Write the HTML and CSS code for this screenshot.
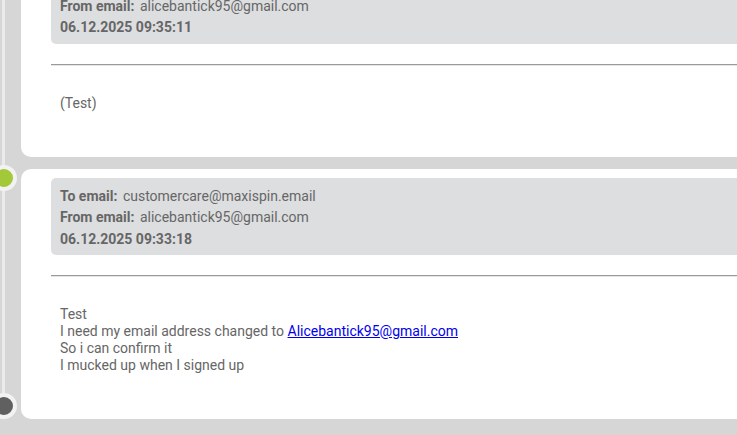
FILE: index.html
```html
<!DOCTYPE html>
<html lang="en">

<head>
    <meta charset="UTF-8">
    <meta name="viewport" content="width=device-width, initial-scale=1.0">
    <title>Ticket history</title>
    <link rel="stylesheet" href="styles.css">
</head>

<body>
    <div class="timeline">
        <div class="entry">
            <span class="dot dot-green"></span>
            <div class="meta">
                <div><b>To email:</b> customercare@maxispin.email</div>
                <div><b>From email:</b> alicebantick95@gmail.com</div>
                <div><b>06.12.2025 09:35:11</b></div>
            </div>
            <hr>
            <div class="message">(Test)</div>
        </div>

        <div class="entry">
            <span class="dot dot-green"></span>
            <div class="meta">
                <div><b>To email:</b> customercare@maxispin.email</div>
                <div><b>From email:</b> alicebantick95@gmail.com</div>
                <div><b>06.12.2025 09:33:18</b></div>
            </div>
            <hr>
            <div class="message">
                Test<br>
                I need my email address changed to <a href="mailto:Alicebantick95@gmail.com">Alicebantick95@gmail.com</a><br>
                So i can confirm it<br>
                I mucked up when I signed up
            </div>
            <span class="dot dot-end"></span>
        </div>
    </div>
</body>

</html>
```

FILE: styles.css
```css
* {
    box-sizing: border-box;
}

body {
    margin: 0;
    background-color: #d6d6d6;
    font-family: Roboto, "Liberation Sans", sans-serif;
    font-size: 14px;
    color: #666;
    overflow: hidden;
}

.timeline {
    position: relative;
    width: 1000px;
    padding-left: 21px;
}

.timeline::before {
    content: "";
    position: absolute;
    left: 2px;
    top: 0;
    bottom: 26px;
    width: 3px;
    background-color: #ebebeb;
}

.entry {
    position: relative;
    background-color: #fff;
    border-radius: 10px 0 0 10px;
    padding: 9px 0 45px 30px;
    margin-bottom: 12px;
}

.entry:first-child {
    margin-top: -43px;
}

.dot {
    position: absolute;
    left: -30px;
    width: 26px;
    height: 26px;
    border-radius: 50%;
    border: 4px solid #f2f2f2;
}

.dot-green {
    top: -4px;
    background-color: #a3c83a;
}

.dot-end {
    bottom: 0;
    background-color: #606060;
}

.meta {
    background-color: #dddee0;
    border-radius: 5px 0 0 5px;
    padding: 8px 9px 5px;
    line-height: 21.5px;
}

.meta b {
    font-weight: bold;
    margin-right: 2px;
}

hr {
    margin: 20px 0 0;
    border: none;
    border-top: 1px solid #9a9a9a;
    border-bottom: 1px solid #e6e6e6;
}

.message {
    padding: 29px 0 0 9px;
    line-height: 17px;
}

.message a {
    color: #0000ee;
}
```
